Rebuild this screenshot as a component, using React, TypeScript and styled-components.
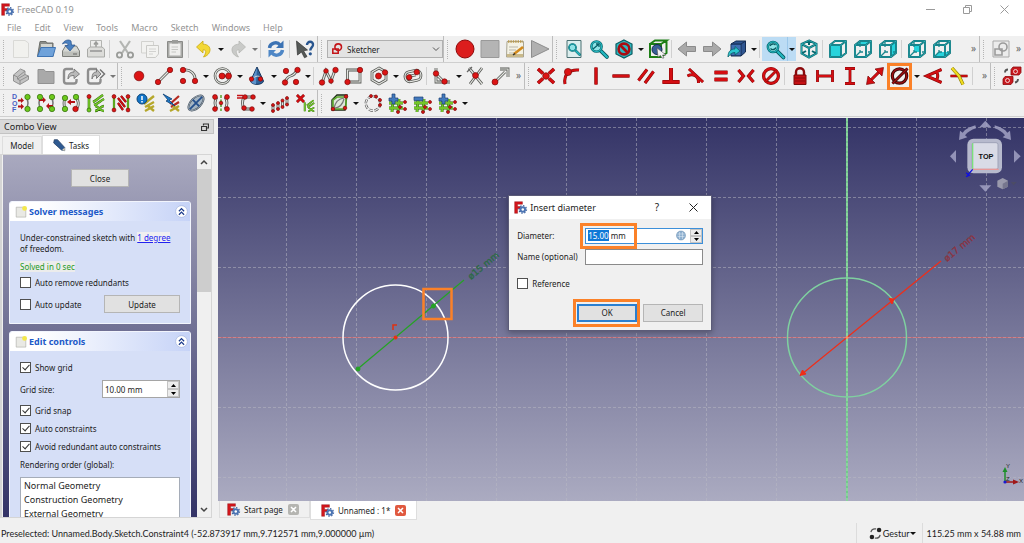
import React, { useEffect, useRef } from "react";
import styled, { createGlobalStyle, css } from "styled-components";

const GlobalStyle = createGlobalStyle`
  * { box-sizing: border-box; }
  html, body, #root { height: 100%; margin: 0; }
  body {
    font-family: "Noto Sans", "Open Sans", sans-serif;
    font-size: 8px;
    line-height: 11px;
    color: #1c1c1c;
    background: #f0f0f0;
    overflow: hidden;
  }
  button, input, select { font: inherit; color: inherit; margin: 0; }
  svg { display: block; flex: none; }
`;

/* ---------- drawing primitives for icons (20 x 20 grid) ---------- */

const Svg = styled.svg.attrs({ viewBox: "0 0 20 20", "aria-hidden": true })<{ $size?: number }>`
  width: ${(p) => p.$size ?? 20}px;
  height: ${(p) => p.$size ?? 20}px;
  overflow: visible;
`;

const Pipe = ({ d }: { d: string }) => (
  <>
    <path d={d} fill="none" stroke="#555753" strokeWidth="2.8" />
    <path d={d} fill="none" stroke="#e4e5e1" strokeWidth="1.2" />
  </>
);
const Dot = ({ x, y, r = 2.7, g }: { x: number; y: number; r?: number; g?: boolean }) => (
  <circle cx={x} cy={y} r={r} fill={g ? "#6cc81c" : "#dc1414"} stroke={g ? "#2f6a08" : "#7d0a0a"} strokeWidth=".7" />
);
const Red = ({ d, w = 3 }: { d: string; w?: number }) => (
  <>
    <path d={d} fill="none" stroke="#7a0808" strokeWidth={w + 1} />
    <path d={d} fill="none" stroke="#d40e12" strokeWidth={w} />
  </>
);
const Green = ({ d, w = 1.6 }: { d: string; w?: number }) => (
  <>
    <path d={d} fill="none" stroke="#2b6407" strokeWidth={w + 0.8} />
    <path d={d} fill="none" stroke="#73c52a" strokeWidth={w} />
  </>
);
const Teal = ({ face }: { face?: string }) => (
  <g strokeLinejoin="round">
    {face && <path d={face} fill="#27d3dc" />}
    <path d="M2 6L13 6V18H2ZM2 6L7 2H18L13 6M18 2V14L13 18" fill="none" stroke="#08666d" strokeWidth="1.9" />
    <path d="M2 6L13 6V18H2ZM2 6L7 2H18L13 6M18 2V14L13 18" fill="none" stroke="#35bfc6" strokeWidth=".7" />
    {!face?.startsWith("M2 6H13") && <path d="M7 3V8M7 13L3 17M7 13H10M15 13H18M7 11V13" fill="none" stroke="#1a868d" strokeWidth="1.3" />}
  </g>
);
const Lens = ({ x, y, s = 1 }: { x: number; y: number; s?: number }) => (
  <g transform={`translate(${x} ${y}) scale(${s})`}>
    <path d="M4 4L11 11" stroke="#06555b" strokeWidth="4" strokeLinecap="round" />
    <path d="M4 4L11 11" stroke="#23b7c0" strokeWidth="2.4" strokeLinecap="round" />
    <circle r="5.4" fill="#8fe3e6" stroke="#06656c" strokeWidth="2.6" />
    <circle r="5.4" fill="none" stroke="#25b4bc" strokeWidth="1.2" />
  </g>
);
const Hatch = () => (
  <Green d="M7 9C10 8 12 5 17 2M8 12C12 11 14 8 18 6M9 13C13 13 13 18 18 18M9 18C13 18 14 13 18 13" w={1.7} />
);
const Grid3 = () => (
  <Green d="M5 7L4 19M11 6L10 19M1 10H15M1 15H15" w={2} />
);

const icons: Record<string, React.ReactNode> = {
  newDoc: <path d="M2.500 1.500H14L17.500 4V18.500H2.500Z" fill="#f1f1ee" stroke="#d9d9d6" />,
  open: (
    <>
      <path d="M1.500 17.500L4 2.500H10L11 4H17V17.500Z" fill="#8b8d89" stroke="#6d6f6b" />
      <path d="M5 5H16V10H5Z" fill="#d3d5d0" />
      <path d="M1.500 17.500L5 8.500H19.500L17 17.500Z" fill="#6fa2da" stroke="#3f74b3" />
    </>
  ),
  save: (
    <>
      <path d="M1.500 12L4.500 7H15.500L18.500 12V17.500H1.500Z" fill="#d6d8d3" stroke="#7b7d79" />
      <path d="M2 12.500H18V17H2Z" fill="#bdbfba" />
      <path d="M12 15H16" stroke="#666" />
      <path d="M1.500 5C3 1 8 0 10 2L10.500 6H14L9 12L4 6.500H7C7 3.500 4 3.500 1.500 5Z" fill="#4a80c0" stroke="#27508a" strokeWidth=".7" />
    </>
  ),
  print: (
    <>
      <path d="M4.500 1.500H15.500V9H4.500Z" fill="#ededeb" stroke="#b3b4b1" />
      <path d="M10 8V4M8 5.500L10 3L12 5.500" stroke="#9b9c99" strokeWidth="1.600" fill="none" />
      <path d="M1.500 10L4 8H16L18.500 10V18H1.500Z" fill="#dcdcd9" stroke="#a9aaa7" />
      <path d="M4 12H16" stroke="#999" strokeWidth="1.600" />
    </>
  ),
  cut: (
    <>
      <path d="M5 2L13 14M15 2L7 14" stroke="#b3b5b2" strokeWidth="2.200" />
      <circle cx="4.500" cy="16" r="2.600" fill="none" stroke="#999b98" strokeWidth="1.800" />
      <circle cx="15.500" cy="16" r="2.600" fill="none" stroke="#999b98" strokeWidth="1.800" />
    </>
  ),
  copy: (
    <>
      <path d="M1.500 2.500H13.500V14H1.500Z" fill="#f2f2f0" stroke="#d2d2cf" />
      <path d="M6.500 6.500H18.500V15L15.500 18.500H6.500Z" fill="#f3f3f1" stroke="#cacac7" />
      <path d="M9 10H16M9 12.500H16M9 15H13" stroke="#d2d2d0" />
    </>
  ),
  paste: (
    <>
      <path d="M2.500 2.500H17.500V18.500H2.500Z" fill="#a9aaa7" stroke="#8a8b88" />
      <path d="M4.500 4.500H15.500V16.500H4.500Z" fill="#efefed" />
      <path d="M7 1H13V4.500H7Z" fill="#9b9c99" />
      <path d="M6.500 8H13M6.500 10.500H13M6.500 13H11" stroke="#c5c6c3" />
    </>
  ),
  undo: <path d="M9 2L2.500 8L9 14V10.800C12 10.500 13 13 9.500 18C17.500 16 19 5.500 9 5.200Z" fill="#f3d835" stroke="#c9a80e" strokeWidth=".8" />,
  redo: <path d="M11 2L17.500 8L11 14V10.800C8 10.500 7 13 10.500 18C2.500 16 1 5.500 11 5.200Z" fill="#c9cac8" stroke="#b5b6b3" strokeWidth=".8" />,
  refresh: (
    <>
      <path d="M3.500 9C4 4 11 2 14 6" fill="none" stroke="#3c73b4" strokeWidth="3.400" />
      <path d="M17.500 1.500V9H10Z" fill="#3c73b4" />
      <path d="M16.500 11C16 16 9 18 6 14" fill="none" stroke="#4f87c6" strokeWidth="3.400" />
      <path d="M2.500 18.500V11H10Z" fill="#4f87c6" />
    </>
  ),
  whats: (
    <>
      <path d="M1.500 2L12.500 11L8.500 11.800L12 17.500L9.500 18.800L6.500 13L2.500 16Z" fill="#565a58" stroke="#333" strokeWidth=".7" />
      <path d="M12 6C12 1.500 18.500 2 18 6C17.800 8.500 15.300 8.500 15.300 11.500" fill="none" stroke="#28558f" strokeWidth="2.400" />
      <circle cx="15.300" cy="14.800" r="1.600" fill="#28558f" />
    </>
  ),
  record: <circle cx="10" cy="10" r="9" fill="#dc1d1d" stroke="#8d0a0a" />,
  stop: <path d="M1 1.500H19V18.500H1Z" fill="#b4b4b4" stroke="#999" />,
  notes: (
    <>
      <path d="M2 2.500H18.500V18H1.500Z" fill="#f4f2e4" stroke="#a9a592" />
      <path d="M3 2.500H18" stroke="#ba9a4e" strokeWidth="2.400" strokeDasharray="1.400 1" />
      <path d="M4 8H13M4 11H11M4 14H10" stroke="#b9b7ab" />
      <path d="M2 15H18V18H2Z" fill="#c9b98a" />
      <path d="M9 15L18 8" stroke="#d28a1d" strokeWidth="2.600" />
      <path d="M8 16L10 14.500" stroke="#333" strokeWidth="1.500" />
    </>
  ),
  play: <path d="M1.500 1.500L19 10L1.500 18.500Z" fill="#b0b0b0" stroke="#8d8d8d" />,
  fitAll: (
    <>
      <path d="M3 1.500H17V18.500H3Z" fill="#dceeee" stroke="#4b7073" />
      <Lens x={8.500} y={8.500} s={0.65} />
    </>
  ),
  fitSel: (
    <>
      <Lens x={7.500} y={7.500} s={0.95} />
      <path d="M4 10L10 5M7 5H10V8" fill="none" stroke="#076169" strokeWidth="1.300" />
    </>
  ),
  drawStyle: (
    <>
      <path d="M10 1L18 5V15L10 19L2 15V5Z" fill="#2cb9c1" stroke="#0a5b61" strokeWidth="1.200" />
      <circle cx="10" cy="10" r="5.400" fill="none" stroke="#a80d12" strokeWidth="2.600" />
      <path d="M6 6L14 14" stroke="#a80d12" strokeWidth="2.600" />
    </>
  ),
  boxSel: (
    <>
      <path d="M2 5H13V18H2ZM2 5L7 1.500H18.500L13 5M18.500 1.500V14L13 18" fill="none" stroke="#1d7f16" strokeWidth="2" />
      <circle cx="9" cy="10.500" r="5" fill="#385f96" stroke="#12294d" />
      <path d="M9 9L18 16L14.500 16L16 19L14 19L12.500 16.500L10 18Z" fill="#f4f4f4" stroke="#555" strokeWidth=".6" />
    </>
  ),
  left: <path d="M1 10L9.500 3V7.500H18.500V12.500H9.500V17Z" fill="#a9a9a9" stroke="#8b8b8b" />,
  right: <path d="M19 10L10.500 3V7.500H1.500V12.500H10.500V17Z" fill="#a9a9a9" stroke="#8b8b8b" />,
  linkNav: (
    <>
      <path d="M4 5L9 2H18.500V13L14 17H4Z" fill="#2f5590" stroke="#152c52" />
      <path d="M4 5H14L18.500 2M14 5V17" fill="none" stroke="#152c52" />
      <path d="M4.500 6H13.500V16H4.500Z" fill="#406fb2" />
      <path d="M1 18C1 12 4 10 8 10V7.500L13 12L8 16V13.500C5 13.500 3 15 1 18Z" fill="#2cc6cf" stroke="#086169" strokeWidth=".8" />
    </>
  ),
  zoomSync: (
    <>
      <Lens x={8} y={8} s={0.95} />
      <path d="M5 7C6 4.500 9 4.500 10.500 6M11 8.500C10 11 7 11 5.500 9.500" fill="none" stroke="#07575e" strokeWidth="1.300" />
    </>
  ),
  iso: (
    <>
      <path d="M10 1.500L17.500 5V14.500L10 18.500L2.500 14.500V5ZM2.500 5L10 9L17.500 5M10 9V18.500M10 1.500V6M2.500 14.500L7 12M17.500 14.500L13 12" fill="none" stroke="#08666d" strokeWidth="2" />
      <path d="M10 1.500L17.500 5V14.500L10 18.500L2.500 14.500V5ZM2.500 5L10 9L17.500 5M10 9V18.500" fill="none" stroke="#35bfc6" strokeWidth=".7" />
    </>
  ),
  front: <Teal face="M2 6H13V18H2Z" />,
  top: <Teal face="M2 6L7 2H18L13 6Z" />,
  rightView: <Teal face="M13 6L18 2V14L13 18Z" />,
  rear: <Teal face="M7 7H13V13H7Z" />,
  bottom: <Teal face="M2 18L7 13H18L13 18Z" />,
  sketchEdit: (
    <>
      <path d="M2 2H18V18H2Z" fill="#ececec" stroke="#a9a9a9" />
      <path d="M4 10H11V16H4Z" fill="none" stroke="#9b9b9b" strokeWidth="1.600" />
      <circle cx="12" cy="8" r="4" fill="none" stroke="#9b9b9b" strokeWidth="1.600" />
    </>
  ),
  part: (
    <g fill="#c3c3c3" stroke="#8a8a8a" strokeWidth=".9" strokeLinejoin="round">
      <path d="M2.500 9L9.500 3L14 5V8.500L17.500 10V13.500L9 18.500L2.500 15Z" />
      <path d="M2.500 9L6.500 11L14 5M6.500 11V13L9 14.500L17.500 10M14 8.500L6.500 13M9 14.500V18" fill="none" />
    </g>
  ),
  group: <path d="M2 3.500H8L9.500 5.500H18V17.500H2Z" fill="#a9a9a9" stroke="#929292" />,
  link: (
    <>
      <path d="M12 3H5.500Q3 3 3 5.500V15Q3 17.500 5.500 17.500H13Q15.500 17.500 15.500 15V13" fill="none" stroke="#8e8e8e" strokeWidth="2.400" />
      <path d="M7 13C7 7 10 6 13 6V3L18.500 8L13 12.500V9.500C10 9.500 8.500 10 7 13Z" fill="#b9b9b9" stroke="#747474" strokeWidth=".9" />
    </>
  ),
  linkGroup: (
    <>
      <path d="M11 3H4.500Q2 3 2 5.500V15Q2 17.500 4.500 17.500H12Q14.500 17.500 14.500 15V13" fill="none" stroke="#8e8e8e" strokeWidth="2.400" />
      <path d="M6 13C6 7 8 6 10.500 6V3L15 8L10.500 12.500V9.500C8 9.500 7 10 6 13Z" fill="#b9b9b9" stroke="#747474" strokeWidth=".9" />
      <path d="M14 3.500L18.500 8L14 12.500" fill="none" stroke="#747474" strokeWidth="1.500" />
    </>
  ),
  point: <Dot x={10} y={10} r={4.8} />,
  line: <><Pipe d="M4 16L16 4" /><Dot x={4} y={16} /><Dot x={16} y={4} /></>,
  arc: <><Pipe d="M5 4C11 3 17 8 16 15" /><Dot x={4} y={4} /><Dot x={4} y={15} /><Dot x={16} y={15} /></>,
  circle: (
    <>
      <circle cx="9.500" cy="10" r="7.500" fill="none" stroke="#555753" strokeWidth="2.600" />
      <circle cx="9.500" cy="10" r="7.500" fill="none" stroke="#e4e5e1" strokeWidth="1.100" />
      <path d="M9 10H16" stroke="#555753" strokeWidth="1.500" />
      <Dot x={9} y={10} r={3} /><Dot x={15.500} y={10} r={3} />
    </>
  ),
  conic: (
    <>
      <path d="M10 1L16.500 15C16 19.500 4 19.500 3.500 15Z" fill="#2e6199" stroke="#16365e" />
      <path d="M10 2L9 18C6 18 4 17 4 15Z" fill="#5c93cc" />
      <path d="M5 14C8 9 13 9 14 13" fill="none" stroke="#d9d9d9" />
      <Dot x={4.500} y={13} r={2.200} /><Dot x={13.500} y={13} r={2.200} />
    </>
  ),
  bspline: <><Pipe d="M4 16C8 6 11 14 16 4" /><Dot x={4} y={16.500} /><Dot x={5} y={5} /><Dot x={16.500} y={4} /><Dot x={15} y={16} /></>,
  polyline: <><Pipe d="M3 17L7 5L12 15L16 4" /><Dot x={3} y={16.500} /><Dot x={7} y={5} r={2.300} /><Dot x={12} y={15} r={2.300} /><Dot x={16.500} y={4} /></>,
  rect: <><Pipe d="M3.500 4H16V16H3.500Z" /><Dot x={3.500} y={16} /><Dot x={16} y={4} /></>,
  polygon: <><Pipe d="M10 2L17 6V14L10 18L3 14V6Z" /><Dot x={9.500} y={10} r={3} /><Dot x={16} y={6.500} /></>,
  slot: <g transform="rotate(-12 10 10)"><Pipe d="M6.500 5H13.500C19.500 5 19.500 15 13.500 15H6.500C.5 15 .5 5 6.500 5Z" /><Pipe d="M7 9.500H13" /><Dot x={6} y={10.500} /><Dot x={14.500} y={7} /></g>,
  fillet: <><Pipe d="M4 2V16H18M4 8L12 16" /><Dot x={4} y={7.500} /><Dot x={12.500} y={15.500} /></>,
  trim: <><Pipe d="M3 2L16 18M16 2L4 18" /><Dot x={9.500} y={9.500} r={2.900} /><path d="M1 6L6 1" stroke="#666" strokeWidth="1.200" /></>,
  extend: <><Pipe d="M4 16L14 6M9 3H17V11" /><Dot x={4} y={16} r={3} /></>,
  coincident: <><Red d="M2 3L7 7.500M18 3L13 7.500M2 17L7 12.500M18 17L13 12.500" w={2.600} /><Dot x={10} y={10} r={3.300} /></>,
  onObject: <><Red d="M4 18C2.500 9 8 3 18 4" w={2} /><Dot x={7} y={6} r={3.600} /></>,
  vertical: <Red d="M10 1.500V18.500" w={2.400} />,
  horizontal: <Red d="M1.500 10H18.500" w={2.400} />,
  parallel: <Red d="M2.500 14.500L11 3.500M9 17L17.500 5.500" w={2.200} />,
  perpendicular: <Red d="M10 2V16M1.500 16H18.500" w={3} />,
  tangent: <Red d="M3 3L17 16M1.500 10C7 7 13 10 12.500 17" w={2} />,
  equal: <Red d="M3.500 6.500H16.500M3.500 13.500H16.500" w={3} />,
  symmetric: <><Red d="M2.500 4L7.500 10L2.500 16M17.500 4L12.500 10L17.500 16" w={2.200} /></>,
  block: <><circle cx="10" cy="10" r="7.400" fill="none" stroke="#7a0808" strokeWidth="3.200" /><circle cx="10" cy="10" r="7.400" fill="none" stroke="#d40e12" strokeWidth="2.200" /><Red d="M4.800 15.200L15.200 4.800" w={1.800} /></>,
  lock: <><path d="M6 10V6C6 1 14 1 14 6V10" fill="none" stroke="#8b0a0c" strokeWidth="2.400" /><path d="M4 9H16V18.500H4Z" fill="#c51014" stroke="#7a0808" /><path d="M5 12H15M5 15H15" stroke="#8b0a0c" /></>,
  distH: <Red d="M2.500 4V16M17.500 4V16M2.500 10H17.500" w={1.800} />,
  distV: <Red d="M5 2.500H15M5 17.500H15M10 2.500V17.500" w={1.800} />,
  dist: <><Red d="M5 15L15 5" w={2} /><path d="M1.500 18.500L3 10L10 17ZM18.500 1.500L17 10L10 3Z" fill="#d40e12" stroke="#7a0808" strokeWidth=".7" /></>,
  diameter: <><circle cx="9.500" cy="10" r="7.200" fill="none" stroke="#3d0a0a" strokeWidth="3.200" /><circle cx="9.500" cy="10" r="7.200" fill="none" stroke="#a80f12" strokeWidth="1.200" /><path d="M2.500 17.500L17.500 2.500" stroke="#3d0a0a" strokeWidth="3" /><path d="M2.500 17.500L17.500 2.500" stroke="#a80f12" strokeWidth="1.200" /></>,
  angle: <Red d="M17.500 3.500L2.500 10L17.500 16.500M12.500 6Q15 10 12.500 14" w={2} />,
  snell: <><Red d="M1.500 10H18.500" w={1.600} /><path d="M3 2L10 10L14 18.500" fill="none" stroke="#8a7a00" strokeWidth="3.400" /><path d="M3 2L10 10L14 18.500" fill="none" stroke="#f0dc20" strokeWidth="2.200" /></>,
  virtual: (
    <>
      <path d="M9 3.500L11 1H19V6.500L17 9H9ZM1 13L3 10.500H11V16L9 18.500H1Z" fill="#c91a20" stroke="#8d0a0c" strokeWidth=".8" />
      <circle cx="13.500" cy="5.500" r="2" fill="none" stroke="#f5d5d5" />
      <circle cx="5.500" cy="14.500" r="2" fill="none" stroke="#f5d5d5" />
      <path d="M3 6.500Q3 3.500 6 3.500M16 13Q16 16 13 16.500" fill="none" stroke="#555" strokeWidth="1.800" />
    </>
  ),
  dof: (
    <>
      <g fontSize="7" fontFamily="Liberation Sans" fontWeight="bold" fill="#4a5fc4">
        <text x="1" y="6">D</text><text x="1" y="12.500">O</text><text x="1" y="19">F</text>
      </g>
      <path d="M15 4Q19 10 15 16" fill="none" stroke="#777" strokeWidth="1.500" />
      <path d="M7 6.500H10V4.500L13 7.500L10 10V8.500H7ZM7 12.500H10V10.500L13 13.500L10 16.500V14.500H7Z" fill="#b51216" />
      <Dot x={16.500} y={4} g /><Dot x={16.500} y={16} g />
    </>
  ),
  closeShape: <><path d="M5 4Q1 10 5 16M15 4Q19 10 15 16" fill="none" stroke="#777" strokeWidth="1.500" /><path d="M3 6H7V4L10 7L7 10V8H3ZM17 12H13V10L10 13L13 16V14H17Z" fill="#b51216" /><Dot x={4} y={4} g /><Dot x={4} y={16} g /><Dot x={16} y={4} g /><Dot x={16} y={16} g /></>,
  connect: <><Pipe d="M4 5Q2 10 4 16M15 4Q19 10 16 15" /><path d="M6 9L10 6V8H14V10H10V12Z" fill="#b51216" /><Dot x={4} y={5} g /><Dot x={15} y={4} g /><Dot x={4} y={16} g /><Dot x={14.500} y={16} /></>,
  selConstr: <><Green d="M3 4V17" w={1.800} /><Dot x={3} y={3.500} r={2} /><Dot x={3} y={17} r={2} g /><Hatch /></>,
  selElem: <><Red d="M7 5L14 14M7 10L12 17M10 3L15 9" w={1.300} /><Green d="M3 4V17M17 4V17" w={1.400} /><Dot x={3} y={3.500} r={1.900} /><Dot x={3} y={17} r={1.900} /><Dot x={17} y={3.500} r={1.900} /><Dot x={17} y={17} r={1.900} /></>,
  redundant: <><path d="M8 11L18 3M9 14L18 9M9 18L18 13M12 13L18 18" stroke="#b5a72b" strokeWidth="2.400" /><circle cx="6" cy="6" r="5" fill="#1274c8" stroke="#0c4476" /><path d="M6 3V7M6 8V9.500" stroke="#fff" strokeWidth="1.500" /></>,
  conflict: <><path d="M9 11L18 3M10 14L18 9" stroke="#b52a20" strokeWidth="2.200" /><path d="M9 18L18 13M12 13L18 18" stroke="#b5a72b" strokeWidth="2.400" /><path d="M2 1L11 6L8 7L14 13L5 8L7 7Z" fill="#1c79c9" stroke="#0c3f73" strokeWidth=".8" /></>,
  ellipseAx: <g transform="rotate(-45 10 10)"><ellipse cx="10" cy="10" rx="9.500" ry="5" fill="#a5b5c3" stroke="#3d4b5a" strokeWidth="1.800" /><path d="M1 10H19M10 5V15" stroke="#244f8c" strokeWidth="1.800" /><ellipse cx="10" cy="10" rx="9.500" ry="5" fill="none" stroke="#c9d2da" strokeWidth=".6" /></g>,
  symm: <><Pipe d="M6 4Q2 10 6 16M14 4Q18 10 14 16" /><path d="M10 2V18" stroke="#4a9c1c" strokeWidth="1.400" strokeDasharray="3 1.500" /><Dot x={4} y={4} r={2.400} /><Dot x={4} y={16} r={2.400} /><Dot x={16} y={4} r={2.400} /><Dot x={16} y={16} r={2.400} /><Dot x={10} y={10} r={1.800} /></>,
  clone: <><Pipe d="M16 4H8Q5 10 8 16H14" /><path d="M1 2.500H7M1 5H7" stroke="#c41216" strokeWidth="1.400" /><Dot x={9} y={4} r={2.300} /><Dot x={17} y={4} r={2.300} /><Dot x={8} y={15} r={2.300} /><Dot x={16} y={16} r={2.300} /></>,
  array: <><Pipe d="M3 18V12M8 16V10M12.500 14V8M17 12V5" />{[[3, 18], [3, 12], [8, 16], [8, 10], [12.5, 14], [12.5, 7.5], [17, 11.5], [17, 5]].map(([x, y]) => <Dot key={`${x}-${y}`} x={x} y={y} r={1.500} />)}</>,
  delAll: <><Red d="M2 2L9 9M9 2L2 9" w={1.800} /><g transform="translate(7 6) scale(.68)"><Hatch /><Green d="M4 5V18" w={2} /></g></>,
  bsDegree: <><path d="M3 7L8 2H18L16 17H3Z" fill="#dfe8da" stroke="#1c2b14" strokeWidth="1.400" /><path d="M4 16V7L8 4H17V13L15 16Z" fill="none" stroke="#5ba82c" strokeWidth="1.600" /><path d="M5 15Q7 6 15 5M6 15Q13 14 15 6" fill="none" stroke="#777" strokeWidth="1.200" /><Dot x={4} y={16} r={1.800} /><Dot x={17} y={3.500} r={1.800} /><Dot x={16} y={15} r={1.800} /></>,
  toBspline: <><circle cx="10" cy="10.500" r="7.200" fill="none" stroke="#4b4b4b" strokeWidth="2.400" strokeDasharray="4 1.700" /><circle cx="10" cy="10.500" r="7.200" fill="none" stroke="#efefef" strokeWidth="1.200" strokeDasharray="4 1.700" /><Dot x={8} y={3} r={1.500} /><Dot x={13} y={3.500} r={1.500} /><Dot x={17} y={7} r={1.500} /><Dot x={17} y={12} r={1.500} /></>,
  multUp: <><Grid3 /><path d="M1 5H4V1H7V5H10V8H7V11H4V8H1Z" fill="#4279bd" stroke="#1d4274" strokeWidth=".7" /><Dot x={17} y={9} r={1.500} /><Dot x={12} y={14} r={1.500} /><Dot x={17} y={16} r={1.500} /><Dot x={10} y={19} r={1.500} /></>,
  multDown: <><Grid3 /><path d="M1 4H10V7.500H1Z" fill="#4279bd" stroke="#1d4274" strokeWidth=".7" /><Dot x={17} y={9} r={1.500} /><Dot x={12} y={14} r={1.500} /><Dot x={17} y={16} r={1.500} /><Dot x={10} y={19} r={1.500} /></>,
};

const Logo = () => (
  <Svg $size={13}>
    <path d="M1 1H13V5H5.500V8.500H10V12H5.500V19H1Z" fill="#d3161c" stroke="#8b0d10" strokeWidth=".6" />
    <circle cx="13.500" cy="13" r="5" fill="#4b74b3" />
    <circle cx="13.500" cy="13" r="5.800" fill="none" stroke="#3a5f9d" strokeWidth="1.800" strokeDasharray="2.200 2.300" />
    <circle cx="13.500" cy="13" r="1.900" fill="#fff" />
  </Svg>
);

/* ---------- window frame ---------- */

const Window = styled.div`
  height: 100vh;
  display: flex;
  flex-direction: column;
`;
const TitleBar = styled.header`
  height: 18px;
  flex: none;
  display: flex;
  align-items: center;
  gap: 3px;
  padding: 0 15px 0 1px;
  background: #fff;
  color: #949494;
  font-size: 9px;
`;
const WindowButtons = styled.div`
  margin-left: auto;
  display: flex;
  gap: 28px;
`;
const PlainButton = styled.button`
  display: flex;
  align-items: center;
  justify-content: center;
  padding: 0;
  border: 0;
  background: none;
`;
const MenuBar = styled.nav`
  height: 18px;
  flex: none;
  display: flex;
  align-items: center;
  gap: 13px;
  padding: 0 7px;
  background: #fff;
  color: #949494;
  font-size: 9px;
`;

/* ---------- tool bars ---------- */

const ToolArea = styled.div`
  flex: none;
  padding-bottom: 1px;
`;
const ToolRow = styled.div`
  height: 27px;
  display: flex;
  border-bottom: 1px solid #cfcfcf;
  background: #f0f0f0;
`;
const ToolGroup = styled.div<{ $grow?: boolean; $bare?: boolean }>`
  display: flex;
  align-items: center;
  flex: ${(p) => (p.$grow ? "1 1 0" : "none")};
  min-width: 0;
  border-right: ${(p) => (p.$bare ? "0" : "1px solid #bdbdbd")};
`;
const Handle = styled.span`
  width: 8px;
  height: 20px;
  flex: none;
  background: linear-gradient(#f0f0f0 50%, #b4b4b4 50%) 3px 0 / 1px 2px repeat-y;
`;
const Divider = styled.span`
  width: 4px;
  height: 18px;
  flex: none;
  background: linear-gradient(#d0d0d0, #d0d0d0) 1px 0 / 1px 100% no-repeat;
`;
const toolBase = css<{ $on?: boolean }>`
  position: relative;
  flex: none;
  height: 24px;
  background: ${(p) => (p.$on ? "#bcdcf4" : "transparent")};
`;
const Tool = styled(PlainButton)<{ $on?: boolean }>`
  ${toolBase}
  width: 25px;
`;
const Arrow = styled(PlainButton)<{ $on?: boolean; $dim?: boolean }>`
  ${toolBase}
  width: 9px;
  border-left: ${(p) => (p.$on ? "1px solid #9cc8ea" : "0")};
  &::after {
    content: "";
    border: 3px solid transparent;
    border-top-color: ${(p) => (p.$dim ? "#777" : "#111")};
    border-bottom: 0;
  }
`;
const More = styled(PlainButton)`
  width: 11px;
  margin-left: auto;
  padding-bottom: 2px;
  font-size: 10px;
  color: #666;
`;
const Mark = styled.span<{ $inset: string; $w?: number }>`
  position: absolute;
  inset: ${(p) => p.$inset};
  width: ${(p) => (p.$w ? `${p.$w}px` : "auto")};
  border: 3px solid #fb8128;
  pointer-events: none;
`;
const Workbench = styled.label`
  position: relative;
  width: 116px;
  margin-left: 1px;
  svg { position: absolute; top: 3px; pointer-events: none; }
  svg:first-child { left: 4px; }
  svg:last-child { right: 3px; }
`;
const WorkbenchSelect = styled.select`
  display: block;
  width: 100%;
  height: 18px;
  padding: 0 18px 0 19px;
  appearance: none;
  border: 1px solid #b0b0b0;
  border-radius: 0;
  background: #e3e3e3;
`;

/* Entries: an icon name, "|" divider, "v" drop arrow, "w" dimmed arrow, ">" overflow.
   A leading "+" shows the entry as switched on, "!" puts the highlight frame on it. */
const Tools = ({ items, grow, bare }: { items: string; grow?: boolean; bare?: boolean }) => (
  <ToolGroup $grow={grow} $bare={bare} role="toolbar">
    <Handle />
    {items.split(" ").map((it, i) => {
      if (it === "|") return <Divider key={i} />;
      if (it === ">") return <More key={i} aria-label="More">»</More>;
      const on = it[0] === "+";
      const marked = it[0] === "!";
      const name = on || marked ? it.slice(1) : it;
      if (name === "v" || name === "w") return <Arrow key={i} $on={on} $dim={name === "w"} aria-label="Options" />;
      return (
        <Tool key={i} $on={on} aria-label={name}>
          <Svg>{icons[name]}</Svg>
          {marked && <Mark $inset="-1px 0 -2px 0" />}
        </Tool>
      );
    })}
  </ToolGroup>
);

/* ---------- combo view ---------- */

const Main = styled.main`
  flex: 1;
  min-height: 0;
  display: flex;
`;
const Side = styled.aside`
  width: 218px;
  flex: none;
  display: flex;
  flex-direction: column;
  padding: 1px 4px 5px 0;
`;
const DockTitle = styled.div`
  height: 15px;
  display: flex;
  align-items: center;
  justify-content: space-between;
  padding: 0 4px;
  border: 1px solid #c3c3c3;
  border-left: 0;
  background: #d9d9d9;
  font-size: 9px;
`;
const TabRow = styled.div`
  display: flex;
  align-items: flex-end;
  height: 20px;
  padding-left: 2px;
`;
const Tab = styled.button<{ $active?: boolean }>`
  display: flex;
  align-items: center;
  justify-content: center;
  gap: 3px;
  width: ${(p) => (p.$active ? 58 : 40)}px;
  height: ${(p) => (p.$active ? 19 : 18)}px;
  padding: 0;
  border: 1px solid #dedede;
  border-bottom: 0;
  background: ${(p) => (p.$active ? "#fff" : "#f0f0f0")};
`;
const SideBody = styled.div`
  flex: 1;
  min-height: 0;
  display: flex;
  margin-right: 2px;
  border: 1px solid #d5d5d5;
  border-width: 1px 1px 1px 2px;
`;
const TaskArea = styled.div`
  flex: 1;
  min-width: 0;
  overflow: hidden;
  display: flex;
  flex-direction: column;
  align-items: stretch;
  gap: 7px;
  padding: 14px 6px 0 6px;
  margin-left: 1px;
  background: linear-gradient(#a9a9bf, #333366);
`;
const PushButton = styled.button<{ $w: number; $primary?: boolean }>`
  position: relative;
  width: ${(p) => p.$w}px;
  height: 18px;
  padding: 0;
  border: ${(p) => (p.$primary ? "2px solid #2a7fd0" : "1px solid #b5b5b5")};
  background: #e1e1e1;
`;
const CloseRow = styled.div`
  display: flex;
  justify-content: center;
  padding-bottom: 7px;
`;
const Card = styled.section`
  flex: none;
  border-radius: 3px 3px 0 0;
  border: 1px solid #f2f5fd;
  background: #d6dff7;
`;
const CardHead = styled.h2`
  height: 19px;
  margin: 0;
  display: flex;
  align-items: center;
  gap: 2px;
  padding: 0 2px 0 5px;
  border-radius: 2px 2px 0 0;
  background: linear-gradient(90deg, #fff 15%, #c6d3f7);
  color: #2059c8;
  font-size: 9px;
  font-weight: 700;
  button { margin-left: auto; }
`;
const CardBody = styled.div`
  display: flex;
  flex-direction: column;
  gap: 7px;
  padding: 11px 10px 10px;
`;
const Row = styled.div`
  display: flex;
  align-items: center;
  justify-content: space-between;
`;
const Message = styled.p`
  margin: 0;
  padding-right: 4px;
  a { color: #2222f0; background: #f0f0f0; }
`;
const Solved = styled.span`
  align-self: flex-start;
  margin-bottom: -2px;
  color: #1f9a1f;
  background: #ececec;
`;
const CheckLabel = styled.label`
  display: flex;
  align-items: center;
  gap: 4px;
  height: 11px;
`;
const CheckBox = styled.input.attrs({ type: "checkbox" })`
  appearance: none;
  width: 11px;
  height: 11px;
  flex: none;
  display: flex;
  justify-content: center;
  border: 1px solid #4f4f4f;
  background: #fff;
  &:checked::after {
    content: "";
    width: 3px;
    height: 6px;
    border: solid #333;
    border-width: 0 1px 1px 0;
    transform: rotate(42deg);
  }
`;
const Check = ({ label, on }: { label: string; on?: boolean }) => (
  <CheckLabel>
    <CheckBox defaultChecked={on} />
    {label}
  </CheckLabel>
);
const Spin = styled.div<{ $w?: number; $focus?: boolean }>`
  position: relative;
  display: flex;
  align-items: center;
  gap: 4px;
  width: ${(p) => (p.$w ? `${p.$w}px` : "100%")};
  height: ${(p) => (p.$focus ? 16 : 18)}px;
  border: 1px solid ${(p) => (p.$focus ? "#3c8fd9" : "#a5a5a5")};
  background: #fff;
`;
const TextInput = styled.input<{ $boxed?: boolean }>`
  flex: 1;
  min-width: 0;
  width: 100%;
  height: ${(p) => (p.$boxed ? "16px" : "100%")};
  padding: 0 2px;
  border: ${(p) => (p.$boxed ? "1px solid #8a8a8a" : "0")};
  outline: 0;
  background: #fff;
  &::selection { background: #0f78d7; color: #fff; }
`;
const Steppers = styled.div`
  display: flex;
  flex-direction: column;
  width: 12px;
  height: 100%;
  button { flex: 1; min-height: 0; border: 1px solid #c4c4c4; background: #ececec; }
`;
const StepArrows = () => (
  <Steppers>
    <PlainButton type="button" aria-label="Increase"><svg width="5" height="3"><path d="M0 3L2.500 0L5 3Z" /></svg></PlainButton>
    <PlainButton type="button" aria-label="Decrease"><svg width="5" height="3"><path d="M0 0L2.500 3L5 0Z" /></svg></PlainButton>
  </Steppers>
);
const List = styled.ul`
  height: 62px;
  margin: 0;
  padding: 1px 3px;
  list-style: none;
  border: 1px solid #a5acb8;
  background: #fff;
  font-size: 9px;
  line-height: 14px;
`;
const Scroll = styled.div`
  width: 14px;
  flex: none;
  display: flex;
  flex-direction: column;
  background: #f0f0f0;
  button { height: 14px; flex: none; }
  button:last-child { margin-top: auto; }
`;
const Thumb = styled.div`
  height: 34%;
  background: #cdcdcd;
`;

const CardIcon = () => (
  <Svg $size={12}>
    <path d="M2 2H18V18.500H2Z" fill="#e9e9e4" stroke="#a9aaa4" />
    <circle cx="16" cy="4" r="4" fill="#f4e84a" />
  </Svg>
);
const Head = ({ title }: { title: string }) => (
  <CardHead>
    <CardIcon />
    {title}
    <PlainButton aria-label={`Collapse ${title}`}>
      <Svg $size={13}>
        <circle cx="10" cy="10" r="9" fill="#fff" stroke="#9fb0dc" />
        <path d="M6 9.500L10 5.500L14 9.500M6 15L10 11L14 15" fill="none" stroke="#1d3c8c" strokeWidth="2" />
      </Svg>
    </PlainButton>
  </CardHead>
);

/* ---------- 3D view ---------- */

const ViewColumn = styled.div`
  flex: 1;
  min-width: 0;
  display: flex;
  flex-direction: column;
`;
const View = styled.div`
  position: relative;
  flex: 1;
  min-height: 0;
  background: linear-gradient(#333366, #ababc1);
`;
const Scene = styled.svg`
  width: 100%;
  height: 100%;
`;
const NavCube = styled.svg`
  position: absolute;
  top: 0;
  right: 0;
  width: 80px;
  height: 80px;
`;
const AxisCross = styled.svg`
  position: absolute;
  right: 0;
  bottom: 12px;
  width: 24px;
  height: 28px;
`;

const Sketch = () => (
  <Scene viewBox="0 0 806 383" preserveAspectRatio="xMidYMid slice" role="img" aria-label="Sketch">
    <g stroke="#b9b9c4" strokeOpacity=".5" strokeDasharray="3 2">
      {[69, 139, 209, 279, 349, 419, 489, 559, 699, 769].map((x) => <path key={x} d={`M${x - 0.5} 0V383`} />)}
      {[9.5, 79.5, 149.5, 289.5, 359.5].map((y) => <path key={y} d={`M0 ${y}H806`} />)}
    </g>
    <path d="M0 219.500H806" stroke="#bf6a74" strokeWidth="1.200" />
    <path d="M0 219.500H806" stroke="#cf9a9f" strokeOpacity=".6" strokeDasharray="3 2" />
    <path d="M629 0V383" stroke="#72c98c" strokeWidth="2" />
    <path d="M629 0V383" stroke="#a3dcae" strokeDasharray="3 2" />

    <circle cx="177.500" cy="219.500" r="52.500" fill="none" stroke="#fff" strokeWidth="1.500" />
    <g stroke="#25a325" fill="#25a325">
      <path d="M139 251.500L246 162" strokeWidth="1.200" />
      <circle cx="140" cy="251" r="2" /><circle cx="215.500" cy="188" r="2" />
    </g>
    <path d="M175 212V207H179" fill="none" stroke="#e03010" strokeWidth="1.500" />
    <circle cx="177.500" cy="219.500" r="2" fill="#e83010" />
    <g fontFamily="DejaVu Sans" fontSize="9">
      <text transform="translate(253 162) rotate(-40)" fill="#2a6a44" stroke="#2a6a44" strokeWidth=".3">ø15 mm</text>
      <text transform="translate(729 144) rotate(-40)" fill="#8c3340" stroke="#8c3340" strokeWidth=".3">ø17 mm</text>
    </g>
    <rect x="205.500" y="171" width="28" height="30" fill="none" stroke="#fb8128" strokeWidth="2.500" />

    <circle cx="629" cy="219.500" r="59.500" fill="none" stroke="#7fd0a0" strokeWidth="1.500" />
    <path d="M584 256L723 143" stroke="#f02d18" strokeWidth="1.200" />
    <path d="M582 257.500L584.500 252L588 256ZM676 181L671 180.500L674 186Z" fill="#f02d18" stroke="#f02d18" />
    <circle cx="629" cy="219.500" r="1.500" fill="#ff8a60" />
  </Scene>
);

/* ---------- dialog ---------- */

const Dialog = styled.div`
  position: absolute;
  left: 36%;
  top: 20%;
  width: 204px;
  border: 1px solid #5b5b78;
  background: #f0f0f0;
  box-shadow: 0 2px 6px rgba(0, 0, 0, 0.3);
`;
const DialogTitle = styled.div`
  height: 23px;
  display: flex;
  align-items: center;
  gap: 3px;
  padding: 0 13px 0 5px;
  background: #fff;
  font-size: 9px;
  button:first-of-type { margin-left: auto; margin-right: 27px; font-size: 10px; }
`;
const Form = styled.form`
  display: grid;
  grid-template-columns: 68px 1fr;
  align-items: center;
  row-gap: 5px;
  padding: 9px 8px 8px;
`;
const RefRow = styled.div`
  grid-column: 1 / -1;
  margin: 8px 0 10px;
`;
const DialogButtons = styled.div`
  grid-column: 1 / -1;
  display: flex;
  justify-content: flex-end;
  gap: 6px;
`;

const InsertDiameter = () => {
  const field = useRef<HTMLInputElement>(null);
  useEffect(() => {
    field.current?.focus();
    field.current?.setSelectionRange(0, 5);
  }, []);
  return (
    <Dialog role="dialog" aria-label="Insert diameter">
      <DialogTitle>
        <Logo />
        Insert diameter
        <PlainButton aria-label="Help">?</PlainButton>
        <PlainButton aria-label="Close dialog">
          <svg width="9" height="9"><path d="M.5 .5L8.500 8.500M8.500 .5L.5 8.500" stroke="#222" /></svg>
        </PlainButton>
      </DialogTitle>
      <Form onSubmit={(e) => e.preventDefault()}>
        <label htmlFor="diameter">Diameter:</label>
        <Spin $focus>
          <TextInput id="diameter" ref={field} defaultValue="15.00 mm" />
          <Svg $size={10}>
            <circle cx="10" cy="9" r="9" fill="#8fb0cf" stroke="#5e86ad" />
            <path d="M3 6H17M3 11H17M7 2V16M13 2V16" stroke="#e4eef6" />
          </Svg>
          <StepArrows />
          <Mark $inset="-6px auto -6px -6px" $w={57} />
        </Spin>
        <label htmlFor="name">Name (optional)</label>
        <TextInput id="name" $boxed />
        <RefRow><Check label="Reference" /></RefRow>
        <DialogButtons>
          <PushButton type="submit" $w={60} $primary>
            OK
            <Mark $inset="-7px -5px -7px -6px" />
          </PushButton>
          <PushButton type="button" $w={60}>Cancel</PushButton>
        </DialogButtons>
      </Form>
    </Dialog>
  );
};

/* ---------- document tabs and status bar ---------- */

const DocTabs = styled.div`
  height: 22px;
  flex: none;
  display: flex;
  align-items: flex-start;
  padding-left: 1px;
`;
const DocTab = styled.div<{ $active?: boolean }>`
  display: flex;
  align-items: center;
  gap: 4px;
  height: ${(p) => (p.$active ? 19 : 17)}px;
  padding: 0 10px 0 ${(p) => (p.$active ? 10 : 7)}px;
  border: 1px solid #dedede;
  border-top: 0;
  background: ${(p) => (p.$active ? "#fff" : "#f0f0f0")};
`;
const TabClose = styled(PlainButton)<{ $active?: boolean }>`
  width: 11px;
  height: 11px;
  margin-left: 1px;
  border-radius: 2px;
  background: ${(p) => (p.$active ? "#e0593f" : "#b5b5b1")};
`;
const CloseX = () => (
  <svg width="7" height="7"><path d="M1 1L6 6M6 1L1 6" stroke="#fff" strokeWidth="1.500" /></svg>
);
const StatusBar = styled.footer`
  height: 20px;
  flex: none;
  display: flex;
  align-items: center;
  padding: 0 3px 0 1px;
  font-family: Lato, "Noto Sans", sans-serif;
  font-size: 9px;
`;
const StatusCell = styled.div`
  display: flex;
  align-items: center;
  height: 100%;
  padding-left: 3px;
  border-left: 1px solid #dcdcdc;
`;
const NavStyle = styled.button`
  display: flex;
  align-items: center;
  gap: 1px;
  height: 100%;
  padding: 0 6px 0 9px;
  border: 0;
  background: none;
  &::after {
    content: "";
    border: 3px solid transparent;
    border-top-color: #111;
    border-bottom: 0;
  }
`;
const StatusText = styled.div`
  flex: 1;
`;

export default function App() {
  return (
    <Window>
      <GlobalStyle />
      <TitleBar>
        <Logo />
        FreeCAD 0.19
        <WindowButtons>
          <PlainButton aria-label="Minimize"><svg width="9" height="9"><path d="M0 4.500H9" stroke="#9a9a9a" /></svg></PlainButton>
          <PlainButton aria-label="Restore"><svg width="9" height="9"><path d="M.5 2.500H6.500V8.500H.5ZM2.500 2.500V.5H8.500V6.500H6.500" fill="none" stroke="#9a9a9a" /></svg></PlainButton>
          <PlainButton aria-label="Close window"><svg width="9" height="9"><path d="M.5 .5L8.500 8.500M8.500 .5L.5 8.500" stroke="#9a9a9a" /></svg></PlainButton>
        </WindowButtons>
      </TitleBar>
      <MenuBar>
        {["File", "Edit", "View", "Tools", "Macro", "Sketch", "Windows", "Help"].map((m) => (
          <PlainButton key={m}>{m}</PlainButton>
        ))}
      </MenuBar>

      <ToolArea>
        <ToolRow>
          <Tools items="newDoc open save print | cut copy paste | undo v redo w | refresh | whats" />
          <ToolGroup>
            <Handle />
            <Workbench>
              <Svg $size={12}>
                <path d="M3 10H12V17H3Z" fill="none" stroke="#c4161a" strokeWidth="2.600" />
                <circle cx="12" cy="7" r="5.500" fill="none" stroke="#c4161a" strokeWidth="2.600" />
              </Svg>
              <WorkbenchSelect aria-label="Workbench" defaultValue="Sketcher">
                <option>Sketcher</option>
              </WorkbenchSelect>
              <svg width="8" height="12"><path d="M1 4.500L4 7.500L7 4.500" fill="none" stroke="#555" /></svg>
            </Workbench>
          </ToolGroup>
          <Tools items="record stop notes play" />
          <Tools grow items="fitAll fitSel drawStyle v boxSel | left right linkNav v | +zoomSync +v iso | front top rightView | rear bottom >" />
          <Tools bare items="sketchEdit >" />
        </ToolRow>
        <ToolRow>
          <Tools items="part group link linkGroup w" />
          <Tools items="point line arc v circle v conic v bspline v | polyline rect polygon v slot | fillet v trim extend >" />
          <Tools grow items="coincident onObject vertical horizontal parallel perpendicular tangent equal symmetric block | lock distH distV dist !diameter v angle snell | >" />
          <Tools bare items="virtual" />
        </ToolRow>
        <ToolRow>
          <Tools items="dof closeShape connect selConstr selElem redundant conflict ellipseAx symm clone v array delAll" />
          <Tools bare items="bsDegree v toBspline multUp multDown multUp v" />
        </ToolRow>
      </ToolArea>

      <Main>
        <Side>
          <DockTitle>
            Combo View
            <PlainButton aria-label="Float panel"><svg width="8" height="8"><path d="M2.500 2.500V1H7.500V5H5.500M.5 3.500H5.500V7.500H.5Z" fill="none" stroke="#333" strokeWidth="1.200" /></svg></PlainButton>
          </DockTitle>
          <TabRow role="tablist">
            <Tab role="tab">Model</Tab>
            <Tab role="tab" $active>
              <Svg $size={13}>
                <path d="M2 1L7 1L18 13V18L13 17L1 6Z" fill="#2f5a91" stroke="#173257" />
                <path d="M14 17L18 18.500V13Z" fill="#e2d9c0" />
              </Svg>
              Tasks
            </Tab>
          </TabRow>
          <SideBody>
            <TaskArea>
              <CloseRow><PushButton $w={58}>Close</PushButton></CloseRow>
              <Card>
                <Head title="Solver messages" />
                <CardBody>
                  <Message>Under-constrained sketch with <a href="#dof">1 degree</a> of freedom.</Message>
                  <Solved>Solved in 0 sec</Solved>
                  <Check label="Auto remove redundants" />
                  <Row>
                    <Check label="Auto update" />
                    <PushButton $w={76}>Update</PushButton>
                  </Row>
                </CardBody>
              </Card>
              <Card>
                <Head title="Edit controls" />
                <CardBody>
                  <Check label="Show grid" on />
                  <Row>
                    <label htmlFor="grid">Grid size:</label>
                    <Spin $w={78}>
                      <TextInput id="grid" defaultValue="10.00 mm" />
                      <StepArrows />
                    </Spin>
                  </Row>
                  <Check label="Grid snap" on />
                  <Check label="Auto constraints" on />
                  <Check label="Avoid redundant auto constraints" on />
                  <span>Rendering order (global):</span>
                  <List>
                    <li>Normal Geometry</li>
                    <li>Construction Geometry</li>
                    <li>External Geometry</li>
                  </List>
                </CardBody>
              </Card>
            </TaskArea>
            <Scroll>
              <PlainButton aria-label="Scroll up"><svg width="8" height="6"><path d="M1 5L4 2L7 5" fill="none" stroke="#444" strokeWidth="1.500" /></svg></PlainButton>
              <Thumb />
              <PlainButton aria-label="Scroll down"><svg width="8" height="6"><path d="M1 1L4 4L7 1" fill="none" stroke="#444" strokeWidth="1.500" /></svg></PlainButton>
            </Scroll>
          </SideBody>
        </Side>

        <ViewColumn>
          <View>
            <Sketch />
            <NavCube viewBox="42 24 240 240" aria-hidden="true">
              <g fill="#a2a2c4" fillOpacity=".85">
                <path d="M148 52L166 32L184 52Z" />
                <path d="M148 226H184L166 245Z" />
                <path d="M78 120V158L60 139Z" />
                <path d="M252 120V158L272 139Z" />
                <path d="M136 46Q108 54 98 68L90 62L87 90L112 82L105 76Q116 62 138 55Z" />
                <path d="M194 46Q222 54 232 68L240 62L243 90L218 82L225 76Q214 62 194 55Z" />
              </g>
              <rect x="112" y="86" width="104" height="104" rx="18" fill="#b7bacd" />
              <rect x="126" y="98" width="78" height="80" rx="6" fill="#d9dbe6" stroke="#9fa3b8" strokeWidth="3" />
              <path d="M128 178V100" stroke="#7be07b" strokeWidth="4" />
              <path d="M128 178H206" stroke="#e89a9a" strokeWidth="4" />
              <path d="M128 178L112 196M108 188L118 196L108 200" stroke="#1010e0" strokeWidth="4" fill="none" />
              <text x="168" y="147" textAnchor="middle" fontFamily="Liberation Sans" fontSize="22" fontWeight="bold" fill="#111">TOP</text>
              <path d="M218 204L234 212V230L218 238L202 230V212Z" fill="#9a9aac" />
              <path d="M218 221V238L234 230V212Z" fill="#77778e" />
              <path d="M242 216H260L251 226Z" fill="#4c4c66" />
            </NavCube>
            <AxisCross viewBox="0 0 24 28" aria-hidden="true">
              <path d="M5 21V9" stroke="#1d8f2a" strokeWidth="1.500" />
              <path d="M2.500 11L5 6L7.500 11Z" fill="#1d8f2a" />
              <path d="M5 21H14" stroke="#a01818" strokeWidth="1.500" />
              <path d="M13 18.500L19 21L13 23.500Z" fill="#a01818" />
              <circle cx="5" cy="21" r="1.600" fill="#1a1ad0" />
              <g fontFamily="Liberation Sans" fontSize="6" fill="#222"><text x="6" y="7">Y</text><text x="6" y="20">Z</text><text x="19" y="22">X</text></g>
            </AxisCross>
            <InsertDiameter />
          </View>
          <DocTabs>
            <DocTab>
              <Logo />
              Start page
              <TabClose aria-label="Close Start page"><CloseX /></TabClose>
            </DocTab>
            <DocTab $active>
              <Logo />
              Unnamed : 1*
              <TabClose $active aria-label="Close Unnamed"><CloseX /></TabClose>
            </DocTab>
          </DocTabs>
        </ViewColumn>
      </Main>

      <StatusBar>
        <StatusText>Preselected: Unnamed.Body.Sketch.Constraint4 (-52.873917 mm,9.712571 mm,9.000000 µm)</StatusText>
        <StatusCell>
          <NavStyle>
            <Svg $size={13}>
              <circle cx="15.500" cy="4.500" r="3.500" fill="#222" /><circle cx="4.500" cy="15.500" r="3.500" fill="#222" />
              <path d="M3 8Q4 2 11 3M17 12Q16 18 9 17" fill="none" stroke="#555" strokeWidth="2" />
            </Svg>
            Gestur
          </NavStyle>
        </StatusCell>
        <StatusCell>115.25 mm x 54.88 mm</StatusCell>
      </StatusBar>
    </Window>
  );
}
